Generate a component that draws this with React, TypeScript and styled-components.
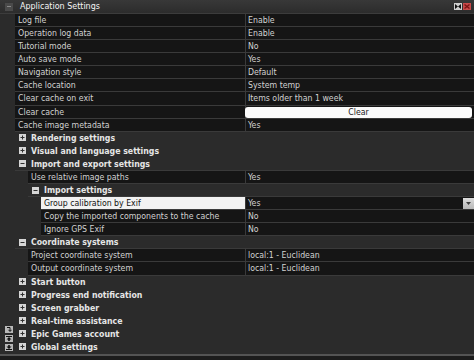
import React from "react";
import styled, { createGlobalStyle } from "styled-components";

const FONT = `"DejaVu Sans Condensed", "DejaVu Sans", sans-serif`;

const Global = createGlobalStyle`
  html, body { margin: 0; padding: 0; background: #2b2b2b; }
  body { width: 474px; height: 360px; overflow: hidden; font-family: ${FONT}; font-stretch: condensed; }
`;

const Panel = styled.div`
  width: 474px;
  height: 360px;
  display: flex;
  flex-direction: column;
  background: #2b2b2b;
  font-size: 8.7px;
  color: #d2d2d2;
`;

const Header = styled.div`
  height: 14px;
  flex-shrink: 0;
  box-sizing: border-box;
  display: flex;
  align-items: center;
  padding: 0 3px 0 5px;
  background: linear-gradient(#383838, #2c2c2c);
  border-bottom: 1px solid #3c3c3c;
`;

const HeaderToggle = styled.div`
  width: 8px;
  height: 8px;
  background: #4a4a4a;
  display: flex;
  align-items: center;
  justify-content: center;
  &::after {
    content: "";
    width: 4px;
    height: 1px;
    background: #8a8a8a;
  }
`;

const HeaderTitle = styled.div`
  margin-left: 7px;
  flex: 1;
  color: #f4f4f4;
  font-size: 8.9px;
  line-height: 13px;
`;

const HeaderButtons = styled.div`
  display: flex;
  gap: 1px;
`;

const HeaderButton = styled.div<{ $danger?: boolean }>`
  width: 8px;
  height: 7px;
  background: ${(p) => (p.$danger ? "#c84a4a" : "#cfcfcf")};
  display: flex;
  align-items: center;
  justify-content: center;
`;

const Body = styled.div`
  flex: 1;
  display: flex;
  min-height: 0;
`;

const Gutter = styled.div`
  width: 15px;
  display: flex;
  flex-direction: column;
  justify-content: flex-end;
  align-items: flex-start;
  padding: 0 0 3px 5px;
  box-sizing: border-box;
  gap: 2px;
`;

const GutterButton = styled.div`
  width: 8px;
  height: 7px;
  background: #b8b8b8;
  display: flex;
  align-items: center;
  justify-content: center;
`;

const Tree = styled.div`
  flex: 1;
  display: grid;
  grid-auto-rows: 1fr;
`;

const Row = styled.div`
  display: flex;
  min-height: 0;
`;

const Indent = styled.div<{ $w: number }>`
  width: ${(p) => p.$w}px;
  flex-shrink: 0;
`;

const RowContent = styled.div<{ $line: boolean }>`
  flex: 1;
  display: flex;
  box-sizing: border-box;
  border-bottom: 1px solid ${(p) => (p.$line ? "#3a3a3a" : "transparent")};
  min-width: 0;
`;

const LabelCell = styled.div<{ $selected?: boolean }>`
  flex: 1;
  padding-left: 3px;
  display: flex;
  align-items: center;
  white-space: nowrap;
  overflow: hidden;
  background: ${(p) => (p.$selected ? "#f2f2f2" : "#151515")};
  color: ${(p) => (p.$selected ? "#111" : "#d2d2d2")};
`;

const ValueCell = styled.div`
  width: 229px;
  flex-shrink: 0;
  box-sizing: border-box;
  border-left: 1px solid #3a3a3a;
  background: #151515;
  padding-left: 2px;
  display: flex;
  align-items: center;
  position: relative;
  white-space: nowrap;
`;

const ValueText = styled.span`
  flex: 1;
`;

const ClearButton = styled.div`
  position: absolute;
  left: -1px;
  right: 2px;
  top: 1px;
  bottom: 0;
  background: #fbfbfb;
  border-radius: 3px;
  color: #1a1a1a;
  display: flex;
  align-items: center;
  justify-content: center;
`;

const DropButton = styled.div`
  width: 11px;
  height: 11px;
  background: linear-gradient(#dcdcdc, #b8b8b8);
  display: flex;
  align-items: center;
  justify-content: center;
`;

const SectionContent = styled(RowContent)`
  align-items: center;
  padding-left: 4px;
`;

const ExpandBox = styled.div`
  width: 7px;
  height: 7px;
  flex-shrink: 0;
  display: flex;
`;

const SectionLabel = styled.div`
  margin-left: 5px;
  font-weight: bold;
  color: #e6e6e6;
  white-space: nowrap;
`;

const Footer = styled.div`
  height: 6px;
  flex-shrink: 0;
  box-sizing: border-box;
  border-top: 2px solid #545454;
  background: #1c1c1c;
`;

type Item =
  | {
      kind: "data";
      depth: number;
      label: string;
      value: string;
      control?: "button" | "select";
      selected?: boolean;
    }
  | { kind: "section"; depth: number; label: string; open: boolean };

const items: Item[] = [
  { kind: "data", depth: 1, label: "Log file", value: "Enable" },
  { kind: "data", depth: 1, label: "Operation log data", value: "Enable" },
  { kind: "data", depth: 1, label: "Tutorial mode", value: "No" },
  { kind: "data", depth: 1, label: "Auto save mode", value: "Yes" },
  { kind: "data", depth: 1, label: "Navigation style", value: "Default" },
  { kind: "data", depth: 1, label: "Cache location", value: "System temp" },
  { kind: "data", depth: 1, label: "Clear cache on exit", value: "Items older than 1 week" },
  { kind: "data", depth: 1, label: "Clear cache", value: "Clear", control: "button" },
  { kind: "data", depth: 1, label: "Cache image metadata", value: "Yes" },
  { kind: "section", depth: 1, label: "Rendering settings", open: false },
  { kind: "section", depth: 1, label: "Visual and language settings", open: false },
  { kind: "section", depth: 1, label: "Import and export settings", open: true },
  { kind: "data", depth: 2, label: "Use relative image paths", value: "Yes" },
  { kind: "section", depth: 2, label: "Import settings", open: true },
  { kind: "data", depth: 3, label: "Group calibration by Exif", value: "Yes", control: "select", selected: true },
  { kind: "data", depth: 3, label: "Copy the imported components to the cache", value: "No" },
  { kind: "data", depth: 3, label: "Ignore GPS Exif", value: "No" },
  { kind: "section", depth: 1, label: "Coordinate systems", open: true },
  { kind: "data", depth: 2, label: "Project coordinate system", value: "local:1 - Euclidean" },
  { kind: "data", depth: 2, label: "Output coordinate system", value: "local:1 - Euclidean" },
  { kind: "section", depth: 1, label: "Start button", open: false },
  { kind: "section", depth: 1, label: "Progress end notification", open: false },
  { kind: "section", depth: 1, label: "Screen grabber", open: false },
  { kind: "section", depth: 1, label: "Real-time assistance", open: false },
  { kind: "section", depth: 1, label: "Epic Games account", open: false },
  { kind: "section", depth: 1, label: "Global settings", open: false },
];

const Expander = ({ open }: { open: boolean }) => (
  <ExpandBox>
    <svg width="7" height="7" viewBox="0 0 7 7">
      <rect x="0" y="0" width="7" height="7" fill="#d6d6d6" />
      <path d="M1.5 3.5H5.5" stroke="#303030" strokeWidth="1" />
      {!open && <path d="M3.5 1.5V5.5" stroke="#303030" strokeWidth="1" />}
    </svg>
  </ExpandBox>
);

const TreeRow = ({ item }: { item: Item }) => {
  const indent = (item.depth - 1) * 13;
  if (item.kind === "section") {
    return (
      <Row>
        <Indent $w={indent} />
        <SectionContent $line={item.open}>
          <Expander open={item.open} />
          <SectionLabel>{item.label}</SectionLabel>
        </SectionContent>
      </Row>
    );
  }
  return (
    <Row>
      <Indent $w={indent} />
      <RowContent $line>
        <LabelCell $selected={item.selected}>{item.label}</LabelCell>
        <ValueCell>
          {item.control === "button" ? (
            <ClearButton>{item.value}</ClearButton>
          ) : (
            <ValueText>{item.value}</ValueText>
          )}
          {item.control === "select" && (
            <DropButton>
              <svg width="5" height="3" viewBox="0 0 5 3">
                <path d="M0 0H5L2.5 3Z" fill="#404040" />
              </svg>
            </DropButton>
          )}
        </ValueCell>
      </RowContent>
    </Row>
  );
};

export default function App() {
  return (
    <>
      <Global />
      <Panel>
        <Header>
          <HeaderToggle />
          <HeaderTitle>Application Settings</HeaderTitle>
          <HeaderButtons>
            <HeaderButton>
              <svg width="6" height="5" viewBox="0 0 6 5">
                <path d="M0 0L3 2.5L0 5ZM6 0L3 2.5L6 5Z" fill="#111" />
              </svg>
            </HeaderButton>
            <HeaderButton $danger>
              <svg width="6" height="5" viewBox="0 0 6 5">
                <path d="M0.5 0.5L5.5 4.5M5.5 0.5L0.5 4.5" stroke="#7a1212" strokeWidth="1.3" />
              </svg>
            </HeaderButton>
          </HeaderButtons>
        </Header>
        <Body>
          <Gutter>
            <GutterButton>
              <svg width="6" height="5" viewBox="0 0 6 5">
                <path d="M1 0.5H4V4M2.5 2.8L4 4.5L5.5 2.8" stroke="#111" strokeWidth="1" fill="none" />
              </svg>
            </GutterButton>
            <GutterButton>
              <svg width="6" height="5" viewBox="0 0 6 5">
                <path d="M0 0.5H6" stroke="#111" strokeWidth="1" />
                <path d="M3 1L5.5 3.5H3.8V5H2.2V3.5H0.5Z" fill="#111" />
              </svg>
            </GutterButton>
            <GutterButton>
              <svg width="6" height="5" viewBox="0 0 6 5">
                <path d="M0 4.5H6" stroke="#111" strokeWidth="1" />
                <path d="M3 4L5.5 1.5H3.8V0H2.2V1.5H0.5Z" fill="#111" />
              </svg>
            </GutterButton>
          </Gutter>
          <Tree>
            {items.map((it, i) => (
              <TreeRow key={i} item={it} />
            ))}
          </Tree>
        </Body>
        <Footer />
      </Panel>
    </>
  );
}
